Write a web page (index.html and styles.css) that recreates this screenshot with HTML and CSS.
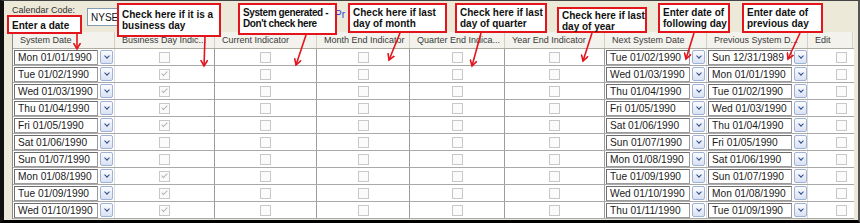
FILE: index.html
```html
<!DOCTYPE html>
<html lang="en">
<head>
  <meta charset="UTF-8" />
  <title>Calendar Maintenance</title>
  <link rel="stylesheet" href="styles.css">
</head>
<body>
  <div class="window">
    <div class="toolbar">
      <span class="label">Calendar Code:</span>
      <span class="select">NYSE</span>
      <a class="link" href="#">Pr</a>
    </div>

    <div class="grid">
      <div class="head">
        <div>System Date</div>
        <div>Business Day Indic...</div>
        <div>Current Indicator</div>
        <div>Month End Indicator</div>
        <div>Quarter End Indica...</div>
        <div>Year End Indicator</div>
        <div>Next System Date</div>
        <div>Previous System D...</div>
        <div>Edit</div>
      </div>
      <div id="rows"></div>
    </div>

    <div class="note n1">Enter a date</div>
    <div class="note n2">Check here if it is a<br>business day</div>
    <div class="note n3">System generated -<br>Don't check here</div>
    <div class="note n4">Check here if last<br>day of month</div>
    <div class="note n5">Check here if last<br>day of quarter</div>
    <div class="note n6">Check here if last<br>day of year</div>
    <div class="note n7">Enter date of<br>following day</div>
    <div class="note n8">Enter date of<br>previous day</div>

    <svg class="arrows" viewBox="0 0 860 223">
      <defs>
        <marker id="head" markerWidth="8" markerHeight="8" refX="6" refY="4" orient="auto" markerUnits="userSpaceOnUse">
          <path d="M0,0.5 L6,4 L0,7.5" fill="none" stroke="#e3141c" stroke-width="1.6"/>
        </marker>
      </defs>
      <g stroke="#e3141c" stroke-width="1.6" fill="none" marker-end="url(#head)">
        <line x1="77" y1="34" x2="77" y2="49"/>
        <line x1="205" y1="37" x2="204" y2="66"/>
        <line x1="306" y1="35" x2="296" y2="65"/>
        <line x1="400" y1="33" x2="389" y2="60"/>
        <line x1="481" y1="33" x2="472" y2="66"/>
        <line x1="592" y1="33" x2="583" y2="61"/>
        <line x1="694" y1="33" x2="686" y2="59"/>
        <line x1="800" y1="33" x2="788" y2="59"/>
      </g>
    </svg>
  </div>

  <script>
    const rows = [
      ["Mon 01/01/1990", 0, "Tue 01/02/1990", "Sun 12/31/1989"],
      ["Tue 01/02/1990", 1, "Wed 01/03/1990", "Mon 01/01/1990"],
      ["Wed 01/03/1990", 1, "Thu 01/04/1990", "Tue 01/02/1990"],
      ["Thu 01/04/1990", 1, "Fri 01/05/1990", "Wed 01/03/1990"],
      ["Fri 01/05/1990", 1, "Sat 01/06/1990", "Thu 01/04/1990"],
      ["Sat 01/06/1990", 0, "Sun 01/07/1990", "Fri 01/05/1990"],
      ["Sun 01/07/1990", 0, "Mon 01/08/1990", "Sat 01/06/1990"],
      ["Mon 01/08/1990", 1, "Tue 01/09/1990", "Sun 01/07/1990"],
      ["Tue 01/09/1990", 1, "Wed 01/10/1990", "Mon 01/08/1990"],
      ["Wed 01/10/1990", 1, "Thu 01/11/1990", "Tue 01/09/1990"]
    ];

    function dateCell(text) {
      return '<div class="date"><span class="field">' + text + '</span><span class="drop"></span></div>';
    }

    let html = "";
    rows.forEach(r => {
      html += '<div class="row">' +
        dateCell(r[0]) +
        '<div><span class="cb' + (r[1] ? ' on' : '') + '"></span></div>' +
        '<div><span class="cb"></span></div>' +
        '<div><span class="cb"></span></div>' +
        '<div><span class="cb"></span></div>' +
        '<div><span class="cb"></span></div>' +
        dateCell(r[2]) +
        dateCell(r[3]) +
        '<div class="edit"><span class="cb"></span></div>' +
        '</div>';
    });
    document.getElementById("rows").innerHTML = html;
  </script>
</body>
</html>
```

FILE: styles.css
```css
body {
  margin: 0;
  font-family: "Liberation Sans", Arial, sans-serif;
}
.window {
  position: relative;
  width: 860px;
  height: 223px;
  box-sizing: border-box;
  background: #ece9d8;
  border-top: 1px solid #444;
  border-left: 4px solid #111;
  border-right: 2px solid #555;
  border-bottom: 3px solid #000;
  overflow: hidden;
}
.toolbar {
  display: flex;
  align-items: flex-start;
  height: 31px;
  padding-left: 8px;
  font-size: 9px;
  color: #333;
}
.label {
  margin-top: 4px;
  width: 75px;
}
.select {
  margin-top: 7px;
  width: 58px;
  height: 18px;
  box-sizing: border-box;
  border: 1px solid #7f9db9;
  background: #fff;
  display: flex;
  align-items: center;
  padding-left: 3px;
  font-size: 10px;
  color: #111;
}
.link {
  margin-left: 190px;
  margin-top: 8px;
  font-size: 10px;
  color: #1f3fd6;
  text-decoration: none;
}

/* grid */
.grid {
  margin-left: 8px;
  width: 841px;
  border-left: 1px solid #8c8c8c;
}
.head,
.row {
  display: grid;
  grid-template-columns: 102px 100px 102px 93px 95px 100px 102px 101px 45px;
  height: 17px;
  box-sizing: border-box;
}
.head {
  background: #f3f2ec;
  border-bottom: 1px solid #aeaca0;
}
.head > div {
  padding-left: 7px;
  border-right: 1px solid #d4d1c2;
  font-size: 9px;
  line-height: 16px;
  color: #3a3a3a;
  white-space: nowrap;
  overflow: hidden;
}
.row {
  background: #fff;
  border-bottom: 1px solid #a9a9a9;
}
.row > div {
  display: flex;
  align-items: center;
  justify-content: center;
  border-right: 1px solid #9c9c9c;
}
.row > .date {
  justify-content: flex-start;
  padding-left: 1px;
  gap: 2px;
  border-right-color: #dcdcdc;
}
.row > .edit {
  justify-content: flex-start;
  padding-left: 28px;
  border-right: none;
}
.field {
  width: 84px;
  height: 15px;
  box-sizing: border-box;
  border: 1px solid #6d6d6d;
  border-right-color: #9a9a9a;
  border-bottom-color: #9a9a9a;
  padding-left: 3px;
  font-size: 10.2px;
  line-height: 13px;
  color: #1a1a1a;
  background: #fff;
  white-space: nowrap;
  overflow: hidden;
}
.drop {
  width: 13px;
  height: 14px;
  box-sizing: border-box;
  border: 1px solid #9fb1d4;
  border-radius: 2px;
  background: linear-gradient(#fbfcff, #d9e1f2);
  display: flex;
  align-items: center;
  justify-content: center;
}
.drop::after {
  content: "";
  width: 3px;
  height: 3px;
  border: solid #284a8c;
  border-width: 0 1.6px 1.6px 0;
  transform: rotate(45deg);
  margin-top: -3px;
}
.cb {
  width: 11px;
  height: 11px;
  box-sizing: border-box;
  border: 1px solid #c8c8c8;
  background: #fbfbfb;
  display: flex;
  align-items: center;
  justify-content: center;
}
.cb.on::after {
  content: "";
  width: 2px;
  height: 5px;
  border: solid #b3b3b3;
  border-width: 0 1.5px 1.5px 0;
  transform: rotate(45deg);
  margin-top: -2px;
}

/* callouts */
.note {
  position: absolute;
  box-sizing: border-box;
  border: 2px solid #e3141c;
  background: #fff;
  padding: 2px 3px;
  font-size: 10px;
  font-weight: bold;
  line-height: 11px;
  color: #111;
  white-space: nowrap;
}
.n1 { left: 3px; top: 14px; width: 75px; height: 19px; padding-top: 3px; }
.n2 { left: 113px; top: 2px; width: 104px; height: 34px; padding-top: 4px; }
.n3 { left: 234px; top: 2px; width: 99px; height: 32px; padding: 2px 0 2px 3px; letter-spacing: -0.4px; }
.n4 { left: 344px; top: 2px; width: 99px; height: 30px; }
.n5 { left: 451px; top: 2px; width: 92px; height: 30px; }
.n6 { left: 553px; top: 6px; width: 90px; height: 26px; padding-top: 1px; }
.n7 { left: 654px; top: 2px; width: 72px; height: 30px; }
.n8 { left: 738px; top: 2px; width: 81px; height: 30px; }
.arrows {
  position: absolute;
  left: -4px;
  top: -1px;
  width: 860px;
  height: 223px;
  pointer-events: none;
}
```
